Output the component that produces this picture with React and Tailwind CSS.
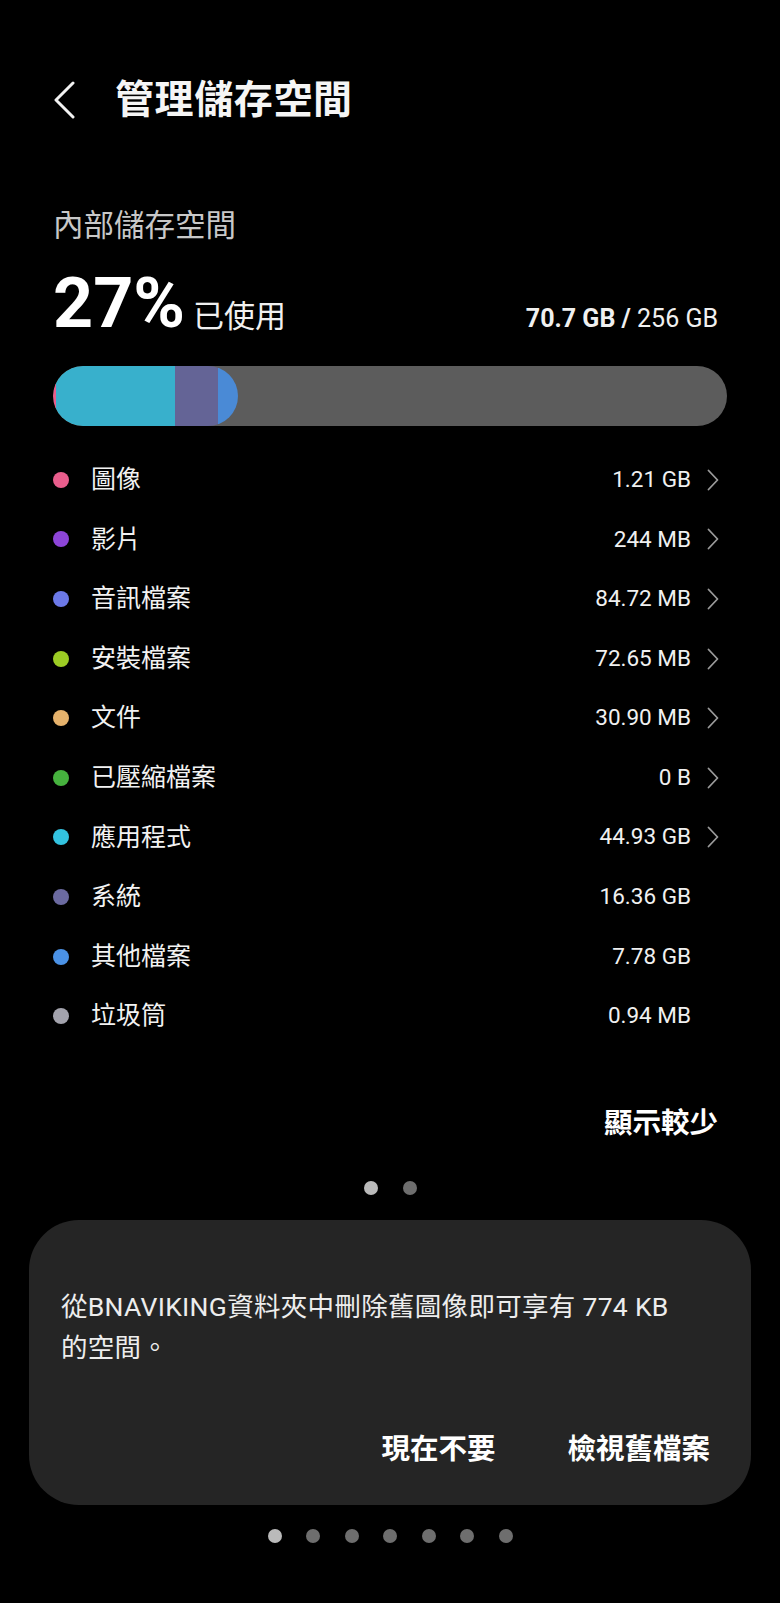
const FONT = { fontFamily: "Roboto, 'Noto Sans CJK TC', sans-serif" };

const ITEMS = [
  { label: '圖像', value: '1.21 GB', color: '#e95d8c', link: true },
  { label: '影片', value: '244 MB', color: '#8d45d8', link: true },
  { label: '音訊檔案', value: '84.72 MB', color: '#6c79e8', link: true },
  { label: '安裝檔案', value: '72.65 MB', color: '#9ccc24', link: true },
  { label: '文件', value: '30.90 MB', color: '#e6b26c', link: true },
  { label: '已壓縮檔案', value: '0 B', color: '#46b23e', link: true },
  { label: '應用程式', value: '44.93 GB', color: '#33c3e0', link: true },
  { label: '系統', value: '16.36 GB', color: '#6b6aa0', link: false },
  { label: '其他檔案', value: '7.78 GB', color: '#4b92e6', link: false },
  { label: '垃圾筒', value: '0.94 MB', color: '#a3a3ad', link: false },
];

function Chevron() {
  return (
    <svg width="12" height="22" viewBox="0 0 12 22" fill="none">
      <path d="M1.5 1.5 L10.5 11 L1.5 20.5" stroke="#9a9a9a" strokeWidth="1.8" strokeLinecap="round" strokeLinejoin="round" />
    </svg>
  );
}

function Dots({ count, size, gap }) {
  return (
    <div className="flex justify-center" style={{ gap }}>
      {Array.from({ length: count }).map((_, i) => (
        <span
          key={i}
          className={`rounded-full ${i === 0 ? 'bg-[#bababa]' : 'bg-[#6e6e6e]'}`}
          style={{ width: size, height: size }}
        />
      ))}
    </div>
  );
}

export default function App() {
  return (
    <div className="min-h-[1603px] w-[780px] bg-black pt-[66px] text-white" style={FONT}>
      {/* header */}
      <div className="flex h-[68px] items-center">
        <svg className="ml-[52px]" width="24" height="38" viewBox="0 0 24 38" fill="none">
          <path d="M21 2 L4 19 L21 36" stroke="#f2f2f2" strokeWidth="3" strokeLinecap="round" strokeLinejoin="round" />
        </svg>
        <h1 className="ml-[39px] text-[39px] font-bold leading-[68px] tracking-[0.6px] text-[#f5f5f5]">管理儲存空間</h1>
      </div>

      <div className="px-[53px]">
        <div className="mt-[72px] text-[30.5px] leading-[40px] text-[#c8c8c8]">內部儲存空間</div>

        <div className="mt-[22px] flex items-baseline justify-between pr-[9px]">
          <div className="flex items-baseline">
            <span className="text-[70px] font-bold leading-none">27%</span>
            <span className="ml-[8px] text-[31px] leading-none text-[#f0f0f0]">已使用</span>
          </div>
          <div className="text-[25px] leading-none text-[#f0f0f0]">
            <span className="font-bold">70.7 GB /</span> 256 GB
          </div>
        </div>

        <div className="mt-[28px] h-[60px] overflow-hidden rounded-full bg-[#5c5c5c]">
          <div className="flex h-full w-[185px] overflow-hidden rounded-full">
            <div className="h-full w-[3px] bg-[#e95d8c]" />
            <div className="h-full w-[119px] bg-[#38b0cc]" />
            <div className="h-full w-[43px] bg-[#646496]" />
            <div className="h-full flex-1 bg-[#4a8ad6]" />
          </div>
        </div>
      </div>

      <ul className="mt-[24px] pl-[53px] pr-[61px]">
        {ITEMS.map((it) => (
          <li key={it.label} className="flex h-[59.6px] items-center">
            <span className="h-[16px] w-[16px] rounded-full" style={{ background: it.color }} />
            <span className="ml-[22px] text-[25px] text-[#f2f2f2]">{it.label}</span>
            <span className="flex-1 text-right text-[22.5px] text-[#f0f0f0]">{it.value}</span>
            <span className="flex w-[28px] justify-end">{it.link ? <Chevron /> : null}</span>
          </li>
        ))}
      </ul>

      <div className="mt-[58px] pr-[62px] text-right text-[28.5px] font-bold leading-[40px]">顯示較少</div>

      <div className="mt-[37px]">
        <Dots count={2} size={14} gap={25} />
      </div>

      <div className="mx-[29px] mt-[25px] rounded-[50px] bg-[#252525] px-[32px] pb-[35px] pt-[66px]">
        <p className="text-[26.5px] leading-[41px] tracking-[0.3px] text-[#ededed]">
          從BNAVIKING資料夾中刪除舊圖像即可享有 774 KB
          <br />
          的空間。
        </p>
        <div className="mt-[62px] flex justify-end gap-[72px] pr-[9px] text-[28.5px] font-bold leading-[40px]">
          <span>現在不要</span>
          <span>檢視舊檔案</span>
        </div>
      </div>

      <div className="mt-[24px]">
        <Dots count={7} size={14} gap={24.5} />
      </div>
    </div>
  );
}
